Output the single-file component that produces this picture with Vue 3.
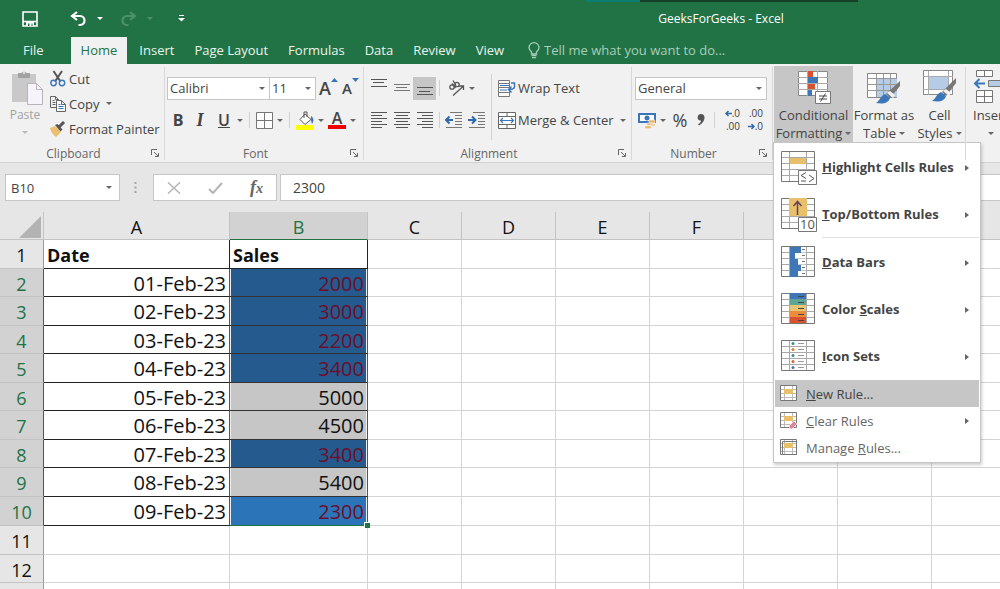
<script setup>
import { ref } from 'vue'

const tabs = ['File', 'Home', 'Insert', 'Page Layout', 'Formulas', 'Data', 'Review', 'View']
const activeTab = ref('Home')
const fontName = ref('Calibri')
const fontSize = ref('11')
const numberFormat = ref('General')
const cellName = ref('B10')
const formula = ref('2300')

const columns = ['A', 'B', 'C', 'D', 'E', 'F', 'G', 'H', 'I']
const rows = [
  ['Date', 'Sales', 'title'],
  ['01-Feb-23', '2000', 'low'],
  ['02-Feb-23', '3000', 'low'],
  ['03-Feb-23', '2200', 'low'],
  ['04-Feb-23', '3400', 'low'],
  ['05-Feb-23', '5000', 'plain'],
  ['06-Feb-23', '4500', 'plain'],
  ['07-Feb-23', '3400', 'low'],
  ['08-Feb-23', '5400', 'plain'],
  ['09-Feb-23', '2300', 'active'],
  ['', '', ''],
  ['', '', ''],
  ['', '', '']
]

const bigItems = [
  { icon: 'highlight', pre: '', key: 'H', post: 'ighlight Cells Rules' },
  { icon: 'top', pre: '', key: 'T', post: 'op/Bottom Rules', divider: true },
  { icon: 'bars', pre: '', key: 'D', post: 'ata Bars' },
  { icon: 'scales', pre: 'Color ', key: 'S', post: 'cales' },
  { icon: 'icons', pre: '', key: 'I', post: 'con Sets' }
]
const smallItems = [
  { icon: 'new', pre: '', key: 'N', post: 'ew Rule...', active: true },
  { icon: 'clear', pre: '', key: 'C', post: 'lear Rules', sub: true },
  { icon: 'manage', pre: 'Manage ', key: 'R', post: 'ules...' }
]
const scaleColors = ['#3f76b5', '#5fa595', '#e8c475', '#ee8a3c', '#d9512f']
const dotColors = ['#3f8f85', '#d8843a', '#3f8f85', '#d8643a', '#3f76b5']
const barWidths = [11, 5, 8, 11, 8]
const alignLines = {
  left: [[0, 16], [0, 11], [0, 16], [0, 11], [0, 16], [0, 11]],
  center: [[0, 16], [2, 14], [0, 16], [2, 14], [0, 16], [2, 14]],
  right: [[0, 16], [5, 16], [0, 16], [5, 16], [0, 16], [5, 16]]
}
</script>

<template>
  <div class="app">
    <header class="titlebar">
      <span class="strip"><i class="teal"></i><i class="dark"></i></span>
      <div class="quick">
        <button class="q save" aria-label="Save">
          <svg width="16" height="16" viewBox="0 0 16 16"><path d="M1 1h14v14H1zM1 10.5h14" fill="none" stroke="#fff" stroke-width="1.6" /><path d="M4 11h8v4H4z" fill="#fff" /><path d="M6 12.5h1.5V15H6zM9.500 12.500h1V15h-1z" fill="#217346" /></svg>
        </button>
        <button class="q undo" aria-label="Undo">
          <svg width="17" height="16" viewBox="0 0 17 16"><path d="M7 1L2 5l5 4M2.500 5H10c6 0 6 9 0 9H8.500" fill="none" stroke="#fff" stroke-width="2.2" /></svg>
        </button>
        <i class="caret light"></i>
        <button class="q redo" aria-label="Redo">
          <svg width="17" height="16" viewBox="0 0 17 16"><path d="M10 1l5 4-5 4M14.500 5H7C1 5 1 14 7 14h1.500" fill="none" stroke="#4d9169" stroke-width="2.2" /></svg>
        </button>
        <i class="caret faint"></i>
        <button class="q custom" aria-label="Customize toolbar">
          <svg width="7" height="7" viewBox="0 0 7 7"><path d="M1 .5h5" stroke="#fff" /><path d="M0 3h7L3.500 6.500z" fill="#fff" /></svg>
        </button>
      </div>
      <div class="doc">GeeksForGeeks - Excel</div>
    </header>

    <nav class="tabs">
      <button v-for="t in tabs" :key="t" :class="['tab', t.toLowerCase().replace(' ', '-'), { on: t === activeTab }]" @click="activeTab = t">{{ t }}</button>
      <label class="tell">
        <svg width="12" height="17" viewBox="0 0 12 17"><path d="M3.500 12V10C2 8.500 1 7.500 1 5.500a5 4.800 0 0 1 10 0C11 7.500 10 8.500 8.500 10v2z" fill="none" stroke="#a9cdb8" stroke-width="1.300" /><path d="M3.500 13.500h5M4 15.700h4" stroke="#a9cdb8" stroke-width="1.300" /></svg>
        <input type="text" placeholder="Tell me what you want to do..." aria-label="Tell me what you want to do" />
      </label>
    </nav>

    <section class="ribbon">
      <div class="group clipboard">
        <div class="body">
          <button class="paste">
            <svg width="33" height="36" viewBox="0 0 33 36"><path d="M1 4h24v28H1z" fill="#c9c9c9" /><path d="M7 8V3h3.500a3 3 0 0 1 5 0H19v5z" fill="#a2a2a2" /><circle cx="13" cy="3" r="1" fill="#eee" /><path d="M16.500 13.500h9l6 6v15h-15z" fill="#f6f4f8" stroke="#b9b2bd" /><path d="M25.500 13.500v6h6" fill="none" stroke="#b9b2bd" /></svg>
            <span>Paste</span>
            <i class="caret pale"></i>
          </button>
          <div class="stack">
            <button><svg width="16" height="17" viewBox="0 0 16 17"><path d="M3.500 1l7 10.500M12 1L5 11.500" stroke="#555" stroke-width="2" /><circle cx="3.500" cy="13" r="2.700" fill="none" stroke="#3b77b8" stroke-width="1.400" /><circle cx="12" cy="13" r="2.700" fill="none" stroke="#3b77b8" stroke-width="1.400" /></svg>Cut</button>
            <button><svg width="16" height="16" viewBox="0 0 16 16"><path d="M6.500 11.500h-6v-11h5l3 3v1M5.500.500v3h3M2.500 4.500h2M2.500 6.500h3M2.500 8.500h3" fill="none" stroke="#666" /><path d="M6.500 4.500h5l4 4v7h-9zM11.500 4.500v4h4" fill="#fff" stroke="#666" /><path d="M8.500 8.500h2M8.500 10.500h5M8.500 12.500h5" stroke="#3b77b8" /></svg>Copy<i class="caret"></i></button>
            <button><svg width="16" height="16" viewBox="0 0 16 16"><path d="M0 7l5-2 6 6-5 5C3 14 1 11 0 7z" fill="#eabf6d" /><path d="M5 4l2.500-1 5 5.500-2 2z" fill="#555" /><path d="M9 6l5-5" stroke="#555" stroke-width="3" /></svg>Format Painter</button>
          </div>
        </div>
        <div class="caption">Clipboard<button class="launch" aria-label="Clipboard options"><svg width="8" height="8" viewBox="0 0 8 8"><path d="M.5 6V.5H6M3 3l4 4M7.500 4v3.500H4" fill="none" stroke="#666" /></svg></button></div>
      </div>

      <div class="group font">
        <div class="rows">
          <div class="row">
            <span class="pick name"><select v-model="fontName" aria-label="Font"><option>Calibri</option></select><i class="caret"></i></span>
            <span class="pick size"><select v-model="fontSize" aria-label="Font size"><option>11</option></select><i class="caret"></i></span>
            <button class="grow" aria-label="Increase font size"><span>A</span><svg width="7" height="4" viewBox="0 0 7 4"><path d="M0 4h7L3.500 0z" fill="#3b77b8" /></svg></button>
            <button class="grow shrink" aria-label="Decrease font size"><span>A</span><svg width="7" height="4" viewBox="0 0 7 4"><path d="M0 0h7L3.500 4z" fill="#3b77b8" /></svg></button>
          </div>
          <div class="row">
            <button class="fmt b">B</button><button class="fmt i">I</button><button class="fmt u">U</button><i class="caret"></i>
            <i class="sep"></i>
            <button aria-label="Borders"><svg width="17" height="17" viewBox="0 0 17 17"><path d="M.5.500h16v16H.5z" fill="#fff" stroke="#777" /><path d="M8.500 1v15M1 8.500h15" stroke="#777" /></svg></button><i class="caret"></i>
            <i class="sep"></i>
            <button aria-label="Fill color"><svg width="18" height="19" viewBox="0 0 18 19"><path d="M0 14h18v5H0z" fill="#ff0" /><path d="M9 3l6 5.500-6 5L4 8.500z" fill="#fff" stroke="#555" /><path d="M8 7V1h3v5" fill="none" stroke="#555" /><path d="M15 5c3 2 3 5 1 8-1-2-1-5-1-8z" fill="#3b77b8" /></svg></button><i class="caret"></i>
            <button class="color" aria-label="Font color"><span>A</span></button><i class="caret"></i>
          </div>
        </div>
        <div class="caption">Font<button class="launch" aria-label="Font options"><svg width="8" height="8" viewBox="0 0 8 8"><path d="M.5 6V.5H6M3 3l4 4M7.500 4v3.500H4" fill="none" stroke="#666" /></svg></button></div>
      </div>

      <div class="group align">
        <div class="alignbody">
          <div class="rows left">
            <div class="row">
              <button class="al" aria-label="Top align"><svg width="16" height="20" viewBox="0 0 16 20"><path d="M0 1.500h16M2 4.500h11M0 8.500h16" stroke="#555" /></svg></button>
              <button class="al" aria-label="Middle align"><svg width="16" height="20" viewBox="0 0 16 20"><path d="M0 6.500h16M2 9.500h11M0 12.500h16" stroke="#777" /></svg></button>
              <button class="al on" aria-label="Bottom align"><svg width="16" height="20" viewBox="0 0 16 20"><path d="M0 9.500h16M2 13.500h11M0 16.500h16" stroke="#555" /></svg></button>
              <i class="sep"></i>
              <button class="orient" aria-label="Orientation"><svg width="17" height="17" viewBox="0 0 17 17"><g fill="none" stroke="#555" stroke-width="1.300"><circle cx="4" cy="7" r="2.200" /><path d="M4 3.500l3.500 4.500" /><circle cx="9" cy="4.500" r="2.200" /><path d="M5 .5l3 5M5 15.500l10-9M11 6h4.500v4" /></g></svg></button><i class="caret"></i>
            </div>
            <div class="row">
              <button v-for="(ls, k) in alignLines" :key="k" class="al" :aria-label="'Align ' + k"><svg width="16" height="17" viewBox="0 0 16 17"><path v-for="(l, n) in ls" :key="n" :d="`M${l[0]} ${n * 3 + 0.5}H${l[1]}`" stroke="#555" /></svg></button>
              <i class="sep"></i>
              <button class="ind" aria-label="Decrease indent"><svg width="18" height="17" viewBox="0 0 18 17"><path d="M5 .5h12M10 3.500h7M10 6.500h7M10 9.500h7M10 12.500h7M1 15.500h16" stroke="#777" /><path d="M1 8h7M4.500 4.500L1 8l3.500 3.500" fill="none" stroke="#2f6aa8" stroke-width="2" /></svg></button>
              <button class="ind" aria-label="Increase indent"><svg width="18" height="17" viewBox="0 0 18 17"><path d="M5 .5h12M10 3.500h7M10 6.500h7M10 9.500h7M10 12.500h7M1 15.500h16" stroke="#777" /><path d="M0 8h7M4 4.500L7.500 8 4 11.500" fill="none" stroke="#2f6aa8" stroke-width="2" /></svg></button>
            </div>
          </div>
          <i class="sep tall"></i>
          <div class="rows right">
            <div class="row"><button class="wide"><svg width="18" height="17" viewBox="0 0 18 17"><path d="M.5.500h11v3H.5zM.5 3.500h11v4H.5zM.5 7.500h11v5H.5zM.5 12.500h11v4H.5z" fill="#fff" stroke="#777" /><path d="M2 5.500h9M2 10h7" stroke="#3b77b8" /><path d="M13 3h3.500v3.500q0 3-5.500 3M13.500 6.500L10.500 9.500l3 3" fill="none" stroke="#3b77b8" stroke-width="1.500" /></svg>Wrap Text</button></div>
            <div class="row"><button class="wide"><svg width="18" height="17" viewBox="0 0 18 17"><path d="M.5.500h17v16H.5zM.5 4.500h17M.5 12.500h17M9 .5v4M9 12.500v4" fill="#fff" stroke="#666" /><path d="M2.500 8.500h13M5 6L2.500 8.500 5 11M13 6l2.500 2.500L13 11" fill="none" stroke="#3b77b8" stroke-width="1.200" /></svg>Merge &amp; Center</button><i class="caret"></i></div>
          </div>
        </div>
        <div class="caption">Alignment<button class="launch" aria-label="Alignment options"><svg width="8" height="8" viewBox="0 0 8 8"><path d="M.5 6V.5H6M3 3l4 4M7.500 4v3.500H4" fill="none" stroke="#666" /></svg></button></div>
      </div>

      <div class="group number">
        <div class="rows">
          <div class="row"><span class="pick general"><select v-model="numberFormat" aria-label="Number format"><option>General</option></select><i class="caret"></i></span></div>
          <div class="row">
            <button class="money" aria-label="Accounting format"><svg width="18" height="17" viewBox="0 0 18 17"><path d="M1 2h16v8H1z" fill="#fff" stroke="#3b77b8" stroke-width="2" /><circle cx="9" cy="6" r="2.500" fill="#3b77b8" /><path d="M11 8h6v3h-6zM9 11h6v2.500H9zM7 14h6v2.500H7zM12 12h5v2h-5z" fill="#eeb468" stroke="#f1f1f1" stroke-width=".5" /></svg></button><i class="caret"></i>
            <button class="pct" aria-label="Percent">%</button>
            <button class="comma" aria-label="Comma style"><svg width="8" height="12" viewBox="0 0 8 12"><path d="M4 0c5 0 5 8-2 11.500l-1-1C3 9 4 8 4 6.500-.5 7-.5 0 4 0z" fill="#555" /></svg></button>
            <i class="sep"></i>
            <button class="dec" aria-label="Increase decimal"><span><svg width="7" height="7" viewBox="0 0 7 7"><path d="M7 3.500H1M3.500 1L1 3.500 3.500 6" fill="none" stroke="#2f6aa8" stroke-width="1.500" /></svg>.0</span><span>.00</span></button>
            <button class="dec" aria-label="Decrease decimal"><span>.00</span><span><svg width="7" height="7" viewBox="0 0 7 7"><path d="M0 3.500h6M3.500 1L6 3.500 3.500 6" fill="none" stroke="#2f6aa8" stroke-width="1.500" /></svg>.0</span></button>
          </div>
        </div>
        <div class="caption">Number<button class="launch" aria-label="Number options"><svg width="8" height="8" viewBox="0 0 8 8"><path d="M.5 6V.5H6M3 3l4 4M7.500 4v3.500H4" fill="none" stroke="#666" /></svg></button></div>
      </div>

      <div class="group styles">
        <div class="menuhost">
          <button class="big cond">
            <svg width="34" height="34" viewBox="0 0 34 34"><path d="M1.500 1.500h29v24h-29z" fill="#fff" stroke="#888" /><path d="M1 7.500h30M1 13.500h30M1 19.500h30M10.500 1v25M20.500 1v25" stroke="#aaa" /><path d="M11 1h5v6h-5zM11 14h7v5h-7z" fill="#d9512f" /><path d="M11 7h10v6H11zM11 20h4v6h-4z" fill="#3f76b5" /><path d="M18.500 21.500h15v12h-15z" fill="#fff" stroke="#777" /><path d="M22 26h8M22 29h8M28.500 23.500l-5 8" stroke="#444" /></svg>
            <span>Conditional</span><span>Formatting<i class="caret"></i></span>
          </button>
          <div class="menu" role="menu">
            <button v-for="m in bigItems" :key="m.icon" :class="['mi', { divider: m.divider }]" role="menuitem">
              <svg width="36" height="36" viewBox="0 0 36 36">
                <path d="M.5 1.500h33v30H.5z" fill="#fff" stroke="#777" />
                <path d="M1 7.500h32M1 13.500h32M1 19.500h32M1 25.500h32M8.500 2v29M25.500 2v29" stroke="#a9a9a9" />
                <template v-if="m.icon === 'highlight'"><path d="M9 8h16v6H9z" fill="#e8bf6b" /><path d="M17.500 20.500h18v14h-18z" fill="#fff" stroke="#777" /><path d="M25 22.500l-5 3 5 3M20 31h5M28 25l5 3.500-5 3.500" fill="none" stroke="#555" /></template>
                <template v-else-if="m.icon === 'top'"><path d="M8 1h18v18H8z" fill="#e8bf6b" /><path d="M16.500 18V4.500M12.500 9l4-4.500 4 4.500" fill="none" stroke="#61435a" stroke-width="1.500" /><path d="M17.500 20.500h18v14h-18z" fill="#fff" stroke="#777" /><text x="26.500" y="32" font-size="13" font-weight="400" text-anchor="middle" fill="#555">10</text></template>
                <template v-else-if="m.icon === 'bars'"><path d="M9 2h16v29H9z" fill="#fff" /><path d="M9 7.500h16M9 13.500h16M9 19.500h16M9 25.500h16" stroke="#c9c9c9" /><template v-for="(w, n) in barWidths" :key="n"><path :d="`M9 ${2 + n * 6}h${w}v6h-${w}z`" fill="#3f76b5" /><path :d="`M21 ${4.5 + n * 6}h3`" stroke="#777" /></template></template>
                <template v-else-if="m.icon === 'scales'"><template v-for="(c, n) in scaleColors" :key="n"><path :d="`M9 ${1 + n * 6}h16v6H9z`" :fill="c" /><path :d="`M17 ${4.5 + n * 6}h6`" stroke="#444" /></template></template>
                <template v-else><template v-for="(c, n) in dotColors" :key="n"><circle cx="12" :cy="4.5 + n * 6" r="1.500" :fill="c" /><path :d="`M17 ${4.5 + n * 6}h6`" stroke="#999" /></template></template>
              </svg>
              <span>{{ m.pre }}<u>{{ m.key }}</u>{{ m.post }}</span>
              <i class="arrow"></i>
            </button>
            <button v-for="m in smallItems" :key="m.icon" :class="['mi small', { active: m.active }]" role="menuitem">
              <svg width="18" height="17" viewBox="0 0 18 17">
                <path d="M.5.500h16v15H.5z" fill="#fff" stroke="#777" /><path d="M4.500 1v14M12.500 1v14M1 4.500h15M1 8.500h15M1 12.500h15" stroke="#bbb" />
                <path d="M4 4h9v5H4z" fill="#e8bf6b" />
                <path v-if="m.icon === 'manage'" d="M2.500 2.500h14v13h-14z" fill="none" stroke="#777" />
                <path v-if="m.icon === 'clear'" d="M9 14l5-5 3 3-5 5H10z" fill="#e08398" stroke="#fff" stroke-width=".6" />
              </svg>
              <span>{{ m.pre }}<u>{{ m.key }}</u>{{ m.post }}</span>
              <i v-if="m.sub" class="arrow"></i>
            </button>
          </div>
        </div>
        <button class="big fat">
          <svg width="36" height="34" viewBox="0 0 36 34"><path d="M1.500 3.500h29v24h-29z" fill="#fff" stroke="#888" /><path d="M11 9h20v18H11z" fill="#b5cbe6" /><path d="M1 8.500h30M1 14.500h30M1 20.500h30M10.500 4v23M17.500 4v23M24.500 4v23" stroke="#999" /><path d="M34 11v5L24 28l-4-4z" fill="#777" /><path d="M24 21l5 4-2 3-6-5z" fill="#f1f1f1" /><path d="M19 24l5 4c-2 6-8 6-14 5 4-2 4-7 9-9z" fill="#3b77b8" /></svg>
          <span>Format as</span><span>Table<i class="caret"></i></span>
        </button>
        <button class="big cell">
          <svg width="36" height="34" viewBox="0 0 36 34"><path d="M1.500.500h29v24h-29z" fill="#fff" stroke="#888" /><path d="M6.500 1v24M26.500 1v24M1 6.500h30M1 19.500h30" stroke="#aaa" /><path d="M7 7h19v12H7z" fill="#b5cbe6" /><path d="M34 8v5L24 26l-4-4z" fill="#777" /><path d="M24 19l5 4-2 3-6-5z" fill="#f1f1f1" /><path d="M19 22l5 4c-2 6-8 6-14 5 4-2 4-7 9-9z" fill="#3b77b8" /></svg>
          <span>Cell</span><span>Styles<i class="caret"></i></span>
        </button>
      </div>

      <div class="group cells">
        <button class="big ins">
          <svg width="34" height="34" viewBox="0 0 34 34"><path d="M3.500.500h16v6h-16zM3.500 20.500h16v12h-16zM11.500.500v6M11.500 20.500v12M3.500 26.500h16" fill="#fff" stroke="#777" /><path d="M15.500 10.500h17v6h-17z" fill="#b5cbe6" stroke="#777" /><path d="M12 13.500H2M6.500 9L2 13.500 6.500 18" fill="none" stroke="#3b77b8" stroke-width="2" /></svg>
          <span>Insert</span><span><i class="caret"></i></span>
        </button>
      </div>
    </section>

    <section class="formulabar">
      <label class="box namebox"><input v-model="cellName" type="text" aria-label="Name box" /><i class="caret"></i></label>
      <svg class="dots" width="3" height="13" viewBox="0 0 3 13"><path d="M.5 1h2v2h-2zM.5 5.500h2v2h-2zM.5 10h2v2h-2z" fill="#a5a5a5" /></svg>
      <div class="box tools">
        <button aria-label="Cancel"><svg width="14" height="12" viewBox="0 0 14 12"><path d="M1 .5l12 11M13 .5l-12 11" stroke="#b5b5b5" stroke-width="1.500" /></svg></button>
        <button aria-label="Enter"><svg width="15" height="12" viewBox="0 0 15 12"><path d="M1 7l4 4L14 1" fill="none" stroke="#b5b5b5" stroke-width="2" /></svg></button>
        <button class="fx" aria-label="Insert function">f<small>x</small></button>
      </div>
      <div class="box formula"><input v-model="formula" type="text" aria-label="Formula" /></div>
    </section>

    <main class="sheet">
      <table>
        <colgroup><col class="c-head" /><col class="c-a" /><col class="c-b" /><col v-for="n in 7" :key="n" class="c-x" /></colgroup>
        <thead>
          <tr>
            <th class="corner"><svg width="22" height="22" viewBox="0 0 22 22"><path d="M22 0v22H0z" fill="#b3b3b3" /></svg></th>
            <th v-for="c in columns" :key="c" :class="{ sel: c === 'B' }">{{ c }}</th>
          </tr>
        </thead>
        <tbody>
          <tr v-for="(r, n) in rows" :key="n" :class="r[2]">
            <th :class="{ sel: n > 0 && n < 10 }">{{ n + 1 }}</th>
            <td class="date">{{ r[0] }}</td>
            <td class="sales">{{ r[1] }}<i v-if="r[2] === 'active'" class="handle"></i></td>
            <td v-for="k in 7" :key="k"></td>
          </tr>
        </tbody>
      </table>
    </main>
  </div>
</template>

<style>
html, body { margin: 0; overflow: hidden; }
</style>

<style scoped>
.app { height: 100vh; display: flex; flex-direction: column; overflow: hidden; background: #fff; color: #444; font: 13px/18px "Open Sans", "Noto Sans", sans-serif; }
.app * { box-sizing: border-box; }
button, input, select { font: inherit; color: inherit; border: 0; padding: 0; margin: 0; background: none; border-radius: 0; outline: 0; }
button { white-space: nowrap; cursor: pointer; }
svg { display: block; flex: none; }
.caret { flex: none; width: 0; height: 0; border: 3px solid transparent; border-top-color: #666; border-bottom: 0; }
.caret.light { border-top-color: #fff; }
.caret.faint { border-top-color: #4d9169; }
.caret.pale { border-top-color: #bbb; }

.titlebar { position: relative; display: flex; align-items: center; height: 37px; flex: none; background: #217346; color: #fff; }
.strip { position: absolute; top: 0; left: 586px; display: flex; }
.strip i { height: 2px; }
.teal { width: 54px; background: #0b7f74; }
.dark { width: 218px; background: #173f28; }
.quick { display: flex; align-items: center; flex: 0 0 442px; padding-left: 22px; height: 34px; }
.undo { margin-left: 32px; }
.light { margin-left: 10px; }
.redo { margin-left: 17px; }
.faint { margin-left: 10px; }
.custom { margin-left: 25px; }
.doc { flex: 1; text-align: center; font-size: 12px; }

.tabs { display: flex; height: 27px; flex: none; background: #217346; color: #e9f3ed; }
.tab { padding: 0 10px 2px; }
.tab.file { padding: 0 27px 2px 23px; }
.tab.on { background: #f1f1f1; color: #217346; margin-right: 2px; }
.tell { display: flex; align-items: center; gap: 4px; margin-left: 14px; flex: 1; }
.tell input { flex: 1; min-width: 0; padding-bottom: 2px; }
.tell input::placeholder { color: #a9cdb8; opacity: 1; }

.ribbon { display: flex; height: 99px; flex: none; background: #f1f1f1; border-bottom: 1px solid #d2d2d2; padding-top: 2px; position: relative; z-index: 2; }
.group { position: relative; display: flex; flex-direction: column; flex: none; }
.group::after { content: ""; position: absolute; right: 0; top: 1px; bottom: 2px; width: 1px; background: #d8d8d8; }
.clipboard { width: 165px; }
.font { width: 199px; }
.align { width: 268px; }
.number { width: 141px; }
.styles { width: 193px; flex-direction: row; align-items: flex-start; padding-left: 1px; }
.cells { width: 60px; padding-left: 7px; }
.cells::after { display: none; }
.caption { margin-top: auto; height: 17px; line-height: 17px; text-align: center; font-size: 12px; color: #666; padding-right: 18px; position: relative; }
.launch { position: absolute; right: 6px; top: 4px; }
.body { display: flex; height: 76px; }
.paste { width: 40px; margin-left: 5px; display: flex; flex-direction: column; align-items: center; color: #a3a3a3; padding-top: 4px; font-size: 12px; }
.paste .caret { margin-top: 7px; }
.paste svg { margin-left: 5px; }
.stack { margin-left: 5px; }
.stack button { display: flex; align-items: center; gap: 3px; height: 25px; }
.stack .caret { margin-left: 4px; }

.rows { padding-top: 6px; }
.row { display: flex; align-items: center; height: 32px; }
.font .rows { padding-left: 2px; }
.pick { position: relative; display: flex; align-items: center; height: 23px; border: 1px solid #c6c6c6; background: #fff; }
.pick select { appearance: none; width: 100%; height: 100%; padding-left: 2px; }
.pick .caret { position: absolute; right: 4px; }
.name { width: 103px; }
.size { width: 46px; border-left: 0; }
.grow { display: flex; margin-left: 3px; font-size: 18px; line-height: 20px; }
.grow span { font-weight: 600; }
.shrink { font-size: 15px; margin-left: 4px; }
.fmt { width: 22px; font-size: 16px; line-height: 20px; }
.b { font-weight: 700; }
.i { font: italic 700 18px/20px "Liberation Serif", serif; }
.u { font-weight: 600; text-decoration: underline; margin-left: 2px; margin-right: 2px; }
.sep { width: 1px; height: 16px; background: #d2d2d2; flex: none; margin: 0 7px; }
.font button + .caret { margin-left: 4px; }
.font .u + .caret { margin-left: 0; }
.font .row .sep { margin: 0 6px; }
.color { margin-left: 4px; width: 18px; height: 18px; border-bottom: 4px solid #f00000; font-size: 16px; line-height: 14px; font-weight: 600; }

.alignbody { display: flex; align-items: flex-start; }
.alignbody .left { width: 127px; padding-left: 3px; }
.al { width: 23px; height: 23px; display: flex; align-items: center; justify-content: center; }
.al.on { background: #c6c6c6; }
.align .row .sep { margin: 0 5px 0 3px; }
.orient { margin: 0 4px 0 3px; }
.ind { margin-right: 5px; }
.align .tall { height: 66px; margin: 8px 0 0; }
.right { padding-left: 6px; }
.wide { display: flex; align-items: center; gap: 2px; }
.wide + .caret { margin-left: 6px; }

.number .rows { padding-left: 3px; }
.general { width: 132px; }
.money { margin: 0 4px 0 3px; }
.pct { margin-left: 4px; width: 20px; font-size: 18px; }
.comma { margin-left: 7px; }
.number .sep { margin: 0 6px 0 9px; }
.dec { display: flex; flex-direction: column; align-items: flex-end; width: 19px; font-size: 10px; line-height: 13px; }
.dec + .dec { margin-left: 4px; }
.dec span { display: flex; align-items: center; height: 13px; }

.big { display: flex; flex-direction: column; align-items: center; height: 76px; padding-top: 4px; }
.big span { display: flex; align-items: center; gap: 3px; height: 18px; }
.big svg { height: 34px; margin-bottom: 2px; }
.menuhost { position: relative; }
.cond { width: 79px; background: #c6c6c6; }
.fat { width: 62px; }
.cell { width: 49px; }
.ins { width: 36px; align-items: flex-start; }
.ins .caret { margin-left: 15px; }

.menu { position: absolute; left: -1px; top: 100%; width: 208px; padding: 1px; background: #fff; border: 1px solid #c6c6c6; box-shadow: 1px 2px 3px #0003; }
.mi { display: flex; align-items: center; width: 100%; height: 47px; padding: 0 10px 0 6px; gap: 5px; font-weight: 700; position: relative; }
.mi span { flex: 1; text-align: left; white-space: pre; padding-bottom: 2px; }
.mi.divider { height: 48px; }
.mi.divider::after { content: ""; position: absolute; left: 47px; right: 0; bottom: 1px; height: 1px; background: #e1e1e1; }
.mi.small { height: 27px; font-weight: 400; gap: 8px; padding-left: 5px; color: #666; }
.mi.small span { padding-bottom: 0; }
.mi.active { background: #c6c6c6; color: #444; }
.arrow { width: 0; height: 0; border: 3px solid transparent; border-left: 4px solid #666; border-right: 0; }

.formulabar { display: flex; align-items: flex-start; height: 49px; flex: none; padding: 11px 0 0 5px; background: #e6e6e6; }
.box { display: flex; align-items: center; height: 27px; background: #fff; border: 1px solid #c6c6c6; }
.namebox { width: 115px; padding: 0 7px 0 5px; }
.namebox input { flex: 1; min-width: 0; }
.dots { margin: 7px 16px 0 14px; }
.tools { width: 124px; padding: 0 13px; justify-content: space-between; }
.fx { font: italic 700 18px/20px "Liberation Serif", serif; color: #666; }
.fx small { font-size: 14px; }
.formula { flex: 1; margin-left: 3px; padding-left: 12px; border-right: 0; }
.formula input { width: 100%; font-size: 14px; }

.sheet { flex: 1; min-height: 0; overflow: hidden; background: #fff; }
table { table-layout: fixed; width: 1026px; min-width: 100%; border-collapse: separate; border-spacing: 0; color: #111; font: 20px/24px "Open Sans", "Noto Sans", sans-serif; }
.c-head { width: 44px; }
.c-a { width: 186px; }
.c-b { width: 138px; }
.c-x { width: 94px; }
th, td { height: 29px; padding: 2px 0 0; border: 0 solid #d4d4d4; border-width: 0 1px 1px 0; }
tbody tr:nth-child(even) > * { height: 28px; }
tbody tr:nth-child(10) > * { height: 29px; }
th { font-weight: 400; font-size: 18px; background: #e6e6e6; border-color: #c3c3c3; }
thead th { height: 28px; }
th.sel { background: #d2d2d2; color: #217346; }
thead th.sel { border-bottom-color: #217346; }
tbody th { border-right-color: #999; }
tbody th.sel { border-right-color: #217346; }
.corner svg { margin-left: 19px; }
.date, .sales { text-align: right; padding-right: 3px; }
.title td { font-size: 18px; font-weight: 700; }
.title .date, .title .sales { text-align: left; padding-left: 3px; }
.title .date, .title .sales, .low .date, .plain .date, .active .date { border-color: #222; }
.low .date, .plain .date, .active .date { border-right-color: #217346; }
tbody .sales { position: relative; }
.low .sales, .plain .sales, .active .sales { border-color: #333; border-right-color: #217346; box-shadow: inset 1px 0 #eee, inset -1px 0 #eee; }
.low .sales { background: #245a8d; color: #6c0f2c; }
.plain .sales { background: #c6c6c6; }
.active .sales { background: #2b74b8; color: #6c0f2c; border-bottom-color: #217346; }
.handle { position: absolute; right: -3px; bottom: -3px; width: 6px; height: 6px; background: #217346; border: 1px solid #fff; border-right: 0; border-bottom: 0; z-index: 1; }
</style>
